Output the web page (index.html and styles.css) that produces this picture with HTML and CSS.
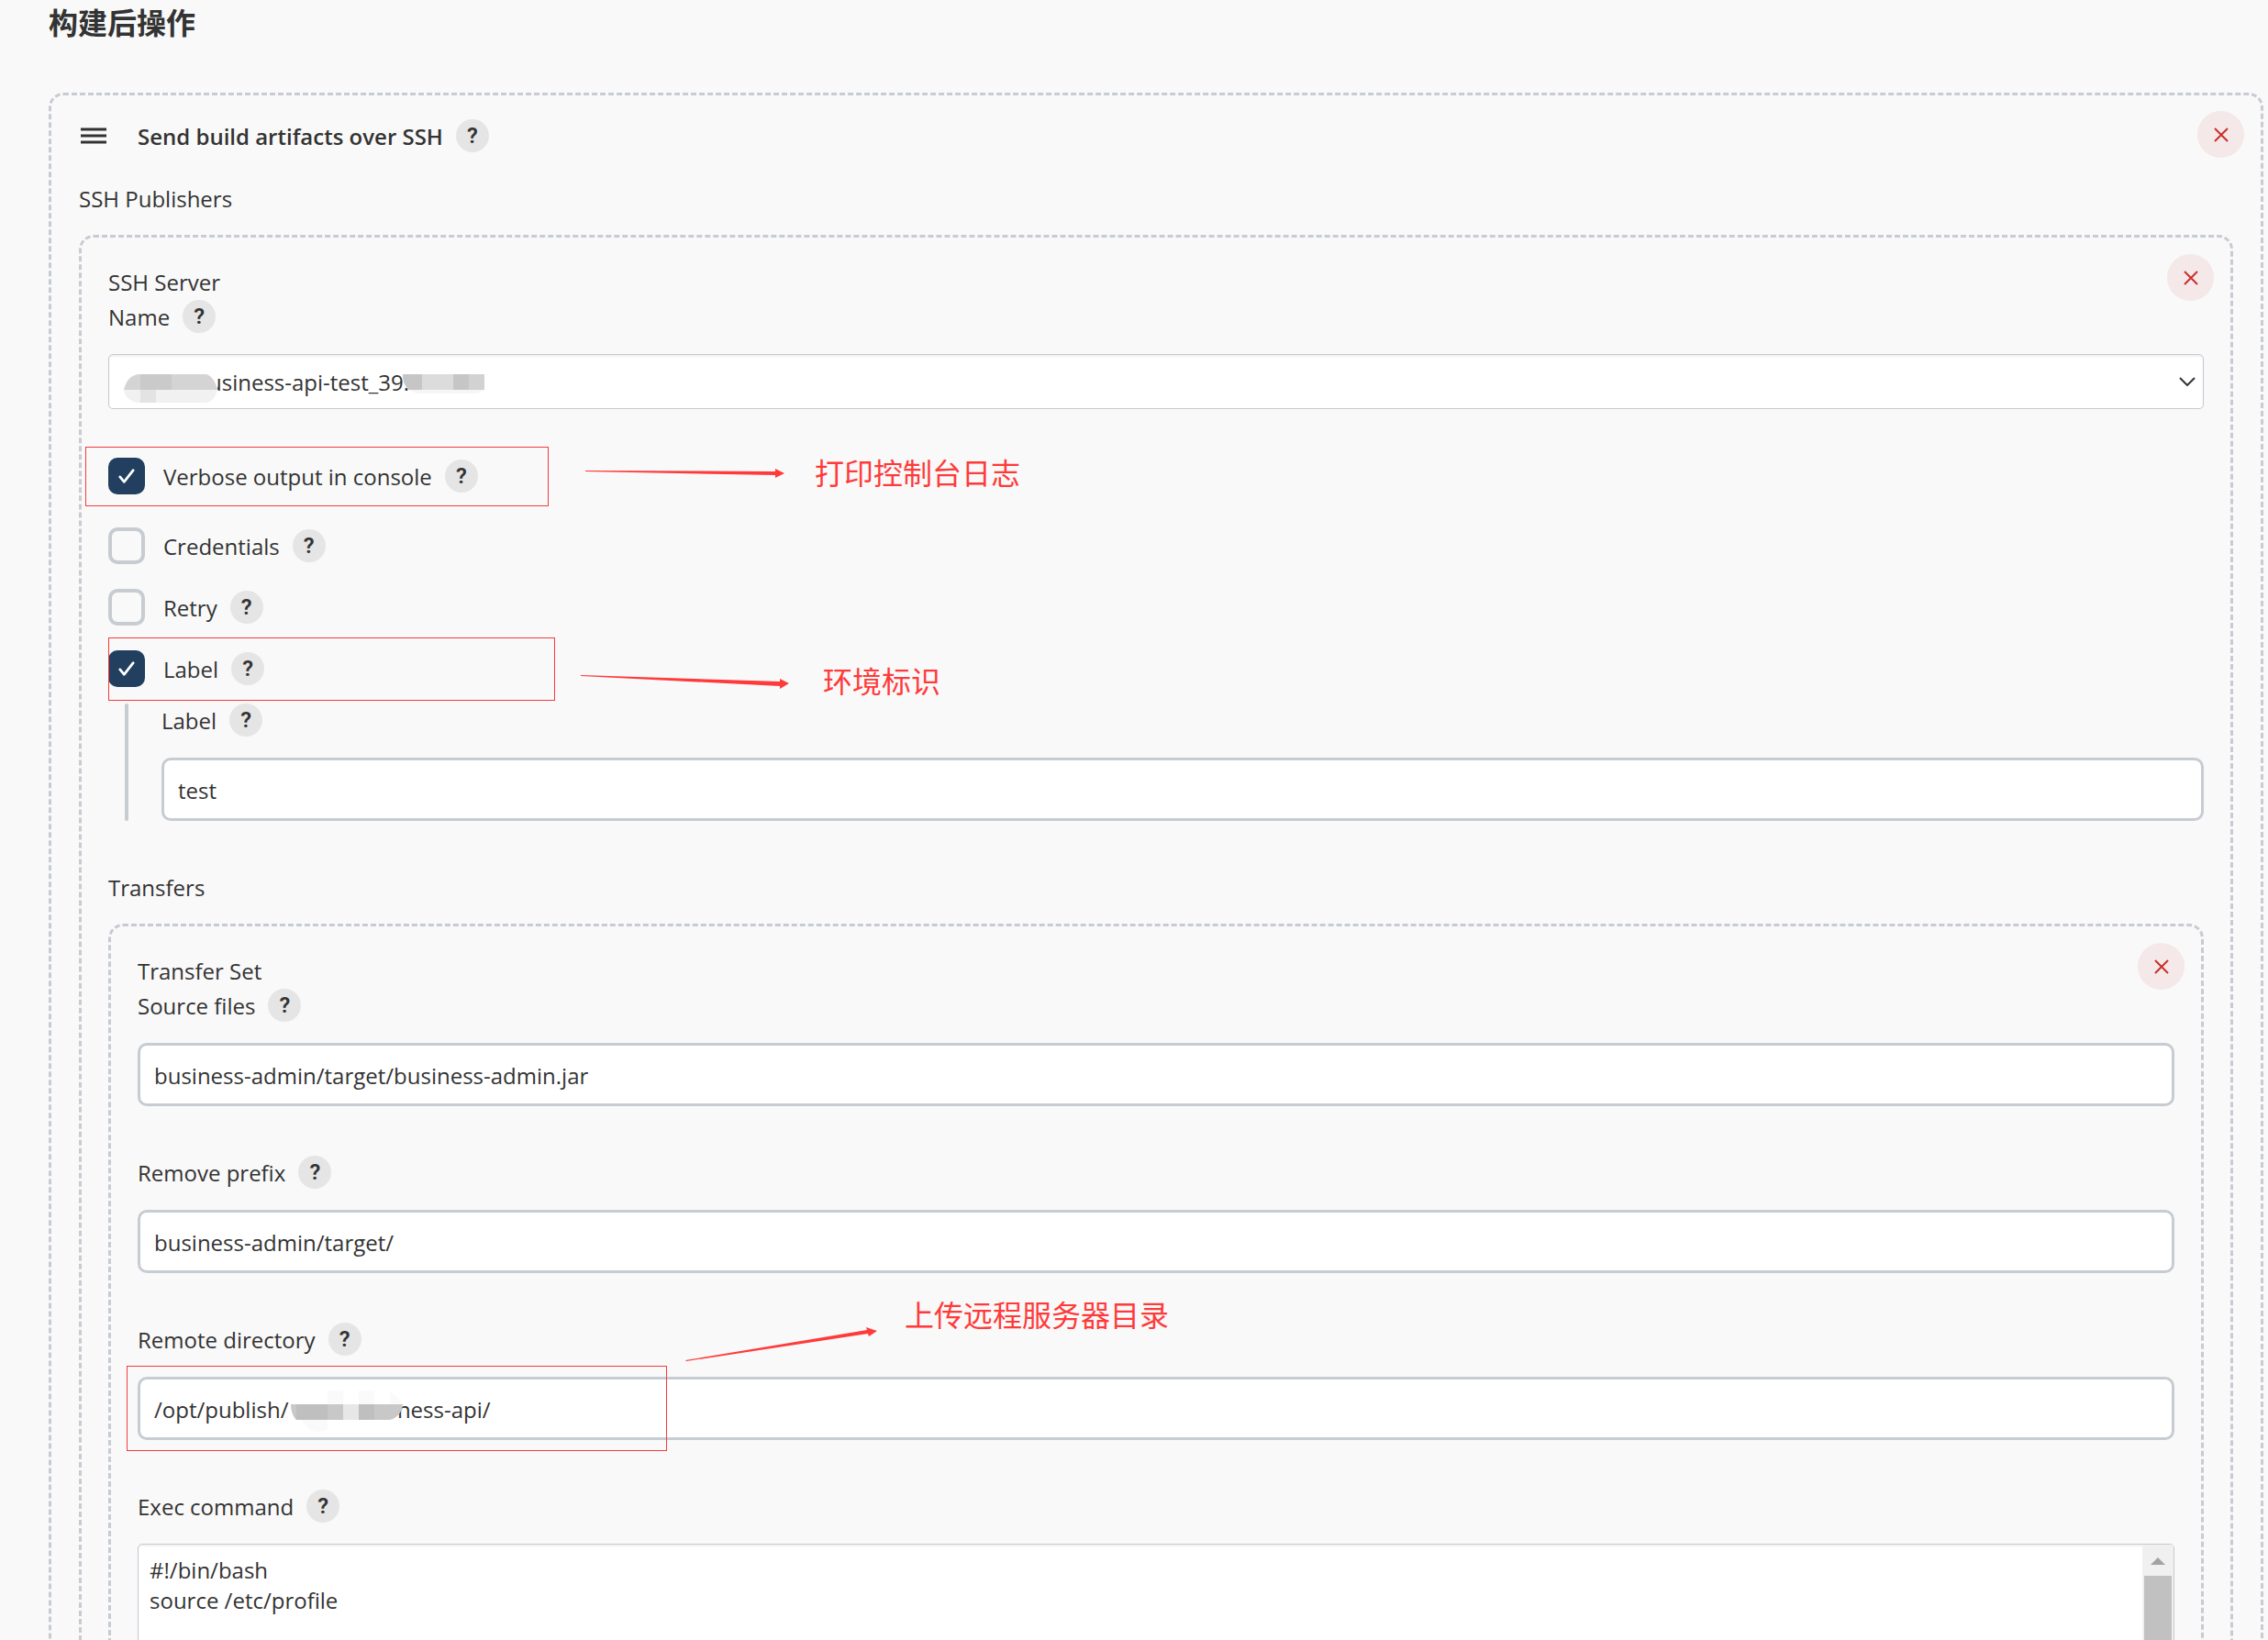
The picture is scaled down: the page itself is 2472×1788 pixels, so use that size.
FILE: index.html
```html
<!DOCTYPE html>
<html lang="zh-CN">
<head>
    <meta charset="UTF-8">
    <meta name="viewport" content="width=device-width, initial-scale=1.0">
    <title>构建后操作</title>
    <link rel="stylesheet" href="styles.css">
</head>
<body>
    <main class="page">
        <h2 class="page-title">构建后操作</h2>

        <section class="chunk chunk-main">
            <button class="close" type="button" aria-label="Remove"><svg viewBox="0 0 16 16"><path d="M1 1l14 14M15 1L1 15"/></svg></button>
            <div class="chunk-header">
                <svg class="handle" viewBox="0 0 28 18"><path d="M0 2h28M0 9h28M0 16h28"/></svg>
                <h3>Send build artifacts over SSH</h3>
                <button class="help" type="button">?</button>
            </div>
            <div class="group-title">SSH Publishers</div>

            <!-- SSH server -->
            <section class="chunk">
                <button class="close" type="button" aria-label="Remove"><svg viewBox="0 0 16 16"><path d="M1 1l14 14M15 1L1 15"/></svg></button>
                <div class="caption">SSH Server</div>
                <div class="field server">
                    <div class="row">
                        <label for="server">Name</label>
                        <button class="help" type="button">?</button>
                    </div>
                    <div class="control">
                        <select id="server" class="select">
                            <option>usiness-api-test_39.</option>
                        </select>
                        <svg class="chevron" viewBox="0 0 18 10"><path d="M1 1l8 8 8-8"/></svg>
                        <svg class="mosaic mosaic-name" viewBox="0 0 102 32">
                            <path fill="#fff" d="M80 0h22v31H80z"/>
                            <path fill="#d4d4d4" d="M0 17C2 7 8 0 18 0h72c6 2 10 8 12 17z"/>
                            <path fill="#cacaca" d="M18 0h17v17H18zM35 0h17v17H35z"/>
                            <path fill="#f1f1f1" d="M0 17h102c-2 8-6 13-13 14H14C6 29 1 24 0 17z"/>
                            <path fill="#e3e3e3" d="M18 17h17v14H18z"/>
                        </svg>
                        <svg class="mosaic mosaic-ip" viewBox="0 0 89 21">
                            <path fill="#dcdcdc" d="M0 0h89v17H6C2 12 0 8 0 0z"/>
                            <path fill="#c6c6c6" d="M0 0h21v17H7C2 12 0 8 0 0zM55 0h17v17H55z"/>
                            <path fill="#d2d2d2" d="M72 0h17v17H72z"/>
                            <path fill="#f6f6f6" d="M8 17h80c-3 3-6 4-10 4H20c-5 0-9-1-12-4z"/>
                        </svg>
                    </div>
                </div>

                <div class="row check first">
                    <input type="checkbox" id="verbose" checked>
                    <label for="verbose">Verbose output in console</label>
                    <button class="help" type="button">?</button>
                    <span class="mark mark-verbose"></span>
                    <div class="note note-verbose">
                        <svg width="218" height="12" viewBox="0 0 218 12"><path d="M0 3l207 1V1l10 5-10 5V8L0 4z"/></svg>
                        <span>打印控制台日志</span>
                    </div>
                </div>
                <div class="row check">
                    <input type="checkbox" id="credentials">
                    <label for="credentials">Credentials</label>
                    <button class="help" type="button">?</button>
                </div>
                <div class="row check">
                    <input type="checkbox" id="retry">
                    <label for="retry">Retry</label>
                    <button class="help" type="button">?</button>
                </div>
                <div class="row check last">
                    <input type="checkbox" id="use-label" checked>
                    <label for="use-label">Label</label>
                    <button class="help" type="button">?</button>
                    <span class="mark mark-label"></span>
                    <div class="note note-label">
                        <svg width="228" height="18" viewBox="0 0 228 18"><path d="M0 3l217 7V7l10 5-10 6v-3L0 4z"/></svg>
                        <span>环境标识</span>
                    </div>
                </div>
                <div class="field nested">
                    <div class="row">
                        <label for="label">Label</label>
                        <button class="help" type="button">?</button>
                    </div>
                    <input class="text" type="text" id="label" value="test">
                </div>

                <div class="group-title">Transfers</div>

                <!-- Transfer set -->
                <section class="chunk">
                    <button class="close" type="button" aria-label="Remove"><svg viewBox="0 0 16 16"><path d="M1 1l14 14M15 1L1 15"/></svg></button>
                    <div class="caption">Transfer Set</div>
                    <div class="field">
                        <div class="row">
                            <label for="source">Source files</label>
                            <button class="help" type="button">?</button>
                        </div>
                        <input class="text" type="text" id="source" value="business-admin/target/business-admin.jar">
                    </div>
                    <div class="field">
                        <div class="row">
                            <label for="prefix">Remove prefix</label>
                            <button class="help" type="button">?</button>
                        </div>
                        <input class="text" type="text" id="prefix" value="business-admin/target/">
                    </div>
                    <div class="field">
                        <div class="row">
                            <label for="remote">Remote directory</label>
                            <button class="help" type="button">?</button>
                        </div>
                        <div class="control">
                            <input class="text" type="text" id="remote" value="/opt/publish/                   ness-api/">
                            <svg class="mosaic mosaic-dir" viewBox="0 0 122 46">
                                <path fill="#fafafa" d="M40 0h17v15H40zM74 0h17v15H74zM108 2c8 4 12 8 13 13h-13zM12 32h28v10c-10 6-20 4-28-10z"/>
                                <path fill="#c8c8c8" d="M0 15h122c-1 9-6 15-14 17H6C2 28 0 22 0 15z"/>
                                <path fill="#bfbfbf" d="M6 15h34v17H6zM74 15h17v17H74z"/>
                                <path fill="#e7e7e7" d="M57 15h17v17H57z"/>
                            </svg>
                            <span class="mark mark-remote"></span>
                            <div class="note note-remote">
                                <svg width="210" height="44" viewBox="0 0 210 44"><path d="M0 38L198 5l-1-3 12 4-9 6-1-3L1 39z"/></svg>
                                <span>上传远程服务器目录</span>
                            </div>
                        </div>
                    </div>
                    <div class="field">
                        <div class="row">
                            <label for="command">Exec command</label>
                            <button class="help" type="button">?</button>
                        </div>
                        <div class="editor">
                            <textarea id="command" rows="6">#!/bin/bash
source /etc/profile
</textarea>
                            <div class="scrollbar">
                                <svg viewBox="0 0 16 8"><path d="M0 8l8-8 8 8z"/></svg>
                                <div class="thumb"></div>
                            </div>
                        </div>
                    </div>
                </section>
            </section>
        </section>
    </main>
</body>
</html>
```
FILE: styles.css
```css
* {
    box-sizing: border-box;
}

body {
    margin: 0;
    height: 100vh;
    overflow: hidden;
    background-color: #f9f9f9;
    color: #333;
    font-family: "Open Sans", "Noto Sans", "Noto Sans CJK SC", sans-serif;
    font-size: 24px;
    line-height: 38px;
}

button, input, select, textarea {
    font: inherit;
    color: inherit;
    margin: 0;
}

.page {
    padding: 0 5px 0 53px;
}

.page-title {
    margin: 0 0 55px;
    font-family: "Noto Sans CJK SC", sans-serif;
    font-size: 32px;
    line-height: 46px;
    font-weight: bold;
}

/* dashed containers */
.chunk {
    position: relative;
    padding: 30px 29px 40px;
    border: 3px dashed #c7cbd2;
    border-radius: 16px;
}

.chunk-main {
    padding: 26px 30px 40px;
}

.chunk-header {
    display: flex;
    align-items: center;
    height: 36px;
    margin-bottom: 32px;
    padding-left: 2px;
}

.chunk-header h3 {
    margin: 0 14px 0 34px;
    padding-top: 2px;
    font-size: 24px;
    font-weight: 600;
}

.handle {
    width: 28px;
    height: 18px;
    stroke: #333;
    stroke-width: 3;
}

.group-title {
    margin-bottom: 20px;
    font-weight: 500;
}

.close {
    position: absolute;
    top: 18px;
    right: 18px;
    display: flex;
    align-items: center;
    justify-content: center;
    width: 51px;
    height: 51px;
    padding: 0;
    border: none;
    border-radius: 50%;
    background-color: #f4e8e8;
    cursor: pointer;
}

.chunk-main > .close {
    top: 17px;
}

.close svg {
    width: 16px;
    height: 16px;
    fill: none;
    stroke: #c9302c;
    stroke-width: 2;
}

/* fields */
.field {
    margin-bottom: 54px;
}

.field.server {
    margin-bottom: 53px;
}

.row {
    display: flex;
    align-items: center;
    gap: 14px;
    height: 36px;
    font-weight: 500;
}

.row label {
    padding-top: 2px;
}

.field > .row {
    margin-bottom: 23px;
}

.help {
    width: 36px;
    height: 36px;
    padding: 0;
    border: none;
    border-radius: 50%;
    background-color: #e5e5e5;
    font-family: Roboto, sans-serif;
    font-size: 24px;
    line-height: 36px;
    font-weight: 600;
    text-align: center;
    cursor: pointer;
}

.control {
    position: relative;
}

.text {
    display: block;
    width: 100%;
    height: 69px;
    padding: 1px 15px 0;
    border: 3px solid #c7cbd2;
    border-radius: 10px;
    background-color: #fff;
}

.select {
    display: block;
    width: 100%;
    height: 60px;
    padding: 2px 50px 0 108px;
    border: 1px solid #c3cad1;
    border-radius: 5px;
    background-color: #fff;
    box-shadow: inset 0 2px 2px rgba(0, 0, 0, 0.06);
    appearance: none;
}

.chevron {
    position: absolute;
    top: 25px;
    right: 9px;
    width: 18px;
    height: 10px;
    fill: none;
    stroke: #333;
    stroke-width: 2;
}

/* checkboxes */
.check {
    position: relative;
    height: 40px;
    margin-bottom: 27px;
}

.check.first {
    margin-bottom: 36px;
}

.check.last {
    margin-bottom: 18px;
}

.check input {
    width: 40px;
    height: 40px;
    margin-right: 6px;
    border: 4px solid #c7cbd2;
    border-radius: 10px;
    appearance: none;
}

.check input:checked {
    border-color: #223f60;
    background: #223f60 url("data:image/svg+xml,%3Csvg xmlns='http://www.w3.org/2000/svg' viewBox='0 0 20 18'%3E%3Cpath d='M2 10l5 6L18 2' fill='none' stroke='white' stroke-width='3' stroke-linecap='round' stroke-linejoin='round'/%3E%3C/svg%3E") center / 18px 18px no-repeat;
}

.nested {
    position: relative;
    padding-left: 58px;
}

.nested::before {
    content: "";
    position: absolute;
    top: 0;
    bottom: 0;
    left: 18px;
    width: 4px;
    border-radius: 2px;
    background-color: #c7cbd2;
}

/* command editor */
.editor {
    display: flex;
    border: 1px solid #c3cad1;
    border-radius: 5px;
    background-color: #fff;
    box-shadow: inset 0 2px 2px rgba(0, 0, 0, 0.06);
    overflow: hidden;
}

.editor textarea {
    flex: 1;
    padding: 11px 12px;
    border: none;
    background: transparent;
    line-height: 33px;
    resize: none;
    overflow: hidden;
}

.scrollbar {
    display: flex;
    flex-direction: column;
    align-items: center;
    width: 34px;
    background-color: #f0f0f0;
}

.scrollbar svg {
    width: 16px;
    height: 8px;
    margin: 14px 0 12px;
    fill: #a3a3a3;
}

.thumb {
    flex: 1;
    width: 30px;
    background-color: #c1c1c1;
}

/* blurred out parts of values */
.mosaic {
    position: absolute;
    pointer-events: none;
}

.mosaic-name {
    top: 22px;
    left: 17px;
    width: 102px;
}

.mosaic-ip {
    top: 22px;
    left: 321px;
    width: 89px;
}

.mosaic-dir {
    top: 15px;
    left: 167px;
    width: 122px;
}

/* red remarks */
.mark {
    position: absolute;
    border: 1px solid #f53b3b;
    pointer-events: none;
}

.mark-verbose {
    top: -12px;
    left: -25px;
    width: 505px;
    height: 65px;
}

.mark-label {
    top: -14px;
    left: 0;
    width: 487px;
    height: 69px;
}

.mark-remote {
    top: -12px;
    left: -12px;
    width: 589px;
    height: 93px;
}

.note {
    position: absolute;
    display: flex;
    align-items: flex-start;
    gap: 32px;
    color: #ff3a3a;
    font-family: "Noto Sans CJK SC", sans-serif;
    font-size: 32px;
    line-height: 48px;
    font-weight: 400;
    white-space: nowrap;
}

.note svg {
    fill: #ff3a3a;
}

.note-verbose {
    top: -9px;
    left: 520px;
}

.note-verbose svg {
    margin-top: 20px;
}

.note-label {
    top: 8px;
    left: 515px;
    gap: 36px;
}

.note-label svg {
    margin-top: 16px;
}

.note-remote {
    top: -93px;
    left: 597px;
    gap: 29px;
}

.note-remote svg {
    margin-top: 37px;
}
```
